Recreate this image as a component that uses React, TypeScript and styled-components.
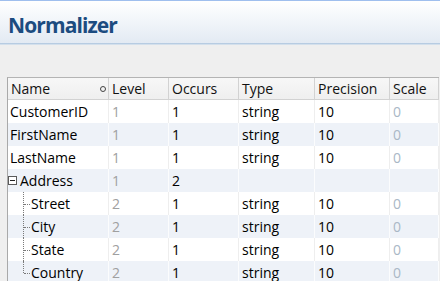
import styled, { createGlobalStyle } from "styled-components";

interface Field {
  name: string;
  level: number;
  occurs: number;
  type?: string;
  precision?: number;
  scale?: number;
  group?: boolean;
  child?: boolean;
  last?: boolean;
}

const fields: Field[] = [
  { name: "CustomerID", level: 1, occurs: 1, type: "string", precision: 10, scale: 0 },
  { name: "FirstName", level: 1, occurs: 1, type: "string", precision: 10, scale: 0 },
  { name: "LastName", level: 1, occurs: 1, type: "string", precision: 10, scale: 0 },
  { name: "Address", level: 1, occurs: 2, group: true },
  { name: "Street", level: 2, occurs: 1, type: "string", precision: 10, scale: 0, child: true },
  { name: "City", level: 2, occurs: 1, type: "string", precision: 10, scale: 0, child: true },
  { name: "State", level: 2, occurs: 1, type: "string", precision: 10, scale: 0, child: true },
  {
    name: "Country",
    level: 2,
    occurs: 1,
    type: "string",
    precision: 10,
    scale: 0,
    child: true,
    last: true,
  },
];

const columns = ["Name", "Level", "Occurs", "Type", "Precision", "Scale"];

const GlobalStyle = createGlobalStyle`
  html, body {
    margin: 0;
    padding: 0;
    background: #efefef;
    overflow: hidden;
  }
  body {
    font-family: "Open Sans", "Noto Sans", sans-serif;
  }
`;

const Page = styled.div`
  width: 440px;
  height: 281px;
  overflow: hidden;
  background: #efefef;
`;

const TitleBar = styled.div`
  height: 42px;
  border-top: 1px solid #9fbfee;
  border-bottom: 1px solid #b7cce2;
  box-shadow: 0 1px 0 #d4e0ec;
  background: linear-gradient(#ffffff 0%, #f5f8fb 35%, #e3eaf3 100%);
  display: flex;
  align-items: center;
  padding-left: 8px;
`;

const Title = styled.h1`
  margin: 0;
  font-size: 21px;
  font-weight: 700;
  color: #1c4c80;
  letter-spacing: -0.9px;
  padding-top: 6px;
`;

const Body = styled.div`
  padding: 33px 0 0 7px;
`;

const Grid = styled.div`
  display: grid;
  grid-template-columns: 101px 60px 70px 76px 75px 49px;
  width: 431px;
  border-left: 1px solid #a9a9a9;
  border-top: 1px solid #b4b4b4;
  font-size: 14px;
  color: #000;
`;

const HeadCell = styled.div`
  height: 21px;
  line-height: 21px;
  padding-left: 3px;
  background: linear-gradient(#f7f7f7, #efefef);
  border-right: 1px solid #d2d2d2;
  border-bottom: 1px solid #d2d2d2;
  display: flex;
  align-items: center;
  justify-content: space-between;
  color: #111;
`;

const SortMark = styled.span`
  width: 4px;
  height: 4px;
  border: 1px solid #444;
  border-radius: 50%;
  margin-right: 2px;
`;

const Cell = styled.div<{ $alt: boolean; $muted?: "gray" | "blue" }>`
  height: 23px;
  line-height: 23px;
  padding-left: 3px;
  background: ${({ $alt }) => ($alt ? "#eef2f8" : "#ffffff")};
  border-right: 1px solid ${({ $alt }) => ($alt ? "#fbfcfd" : "#eeeeee")};
  color: ${({ $muted }) =>
    $muted === "gray" ? "#a0a0a0" : $muted === "blue" ? "#a9b7c6" : "#000"};
  display: flex;
  align-items: stretch;
  white-space: nowrap;
`;

const NameCell = styled(Cell)`
  padding-left: 2px;
`;

const Toggle = styled.span`
  align-self: center;
  box-sizing: border-box;
  width: 9px;
  height: 9px;
  border: 1px solid #5a5a5a;
  margin: 0 3px 0 -2px;
  position: relative;
  background: #fff;

  &::after {
    content: "";
    position: absolute;
    left: 1px;
    right: 1px;
    top: 3px;
    height: 1px;
    background: #222;
  }
`;

const Guide = styled.span<{ $last?: boolean }>`
  position: relative;
  width: 7px;
  margin: 0 1px 0 13px;
  flex: none;

  &::before {
    content: "";
    position: absolute;
    left: 0;
    top: 0;
    height: ${({ $last }) => ($last ? "12px" : "100%")};
    border-left: 1px dotted #7a7a7a;
  }

  &::after {
    content: "";
    position: absolute;
    left: 1px;
    top: 12px;
    width: 6px;
    border-top: 1px dotted #7a7a7a;
  }
`;

const App = () => {
  return (
    <Page>
      <GlobalStyle />
      <TitleBar>
        <Title>Normalizer</Title>
      </TitleBar>
      <Body>
        <Grid>
          {columns.map((c, i) => (
            <HeadCell key={c}>
              {c}
              {i === 0 ? <SortMark /> : null}
            </HeadCell>
          ))}
          {fields.map((f, i) => {
            const alt = i % 2 === 1;
            return [
              <NameCell key={f.name + "-n"} $alt={alt}>
                {f.group ? <Toggle /> : null}
                {f.child ? <Guide $last={f.last} /> : null}
                {f.name}
              </NameCell>,
              <Cell key={f.name + "-l"} $alt={alt} $muted="gray">
                {f.level}
              </Cell>,
              <Cell key={f.name + "-o"} $alt={alt}>
                {f.occurs}
              </Cell>,
              <Cell key={f.name + "-t"} $alt={alt}>
                {f.type ?? ""}
              </Cell>,
              <Cell key={f.name + "-p"} $alt={alt}>
                {f.precision ?? ""}
              </Cell>,
              <Cell key={f.name + "-s"} $alt={alt} $muted="blue">
                {f.scale ?? ""}
              </Cell>,
            ];
          })}
        </Grid>
      </Body>
    </Page>
  );
};

export default App;
